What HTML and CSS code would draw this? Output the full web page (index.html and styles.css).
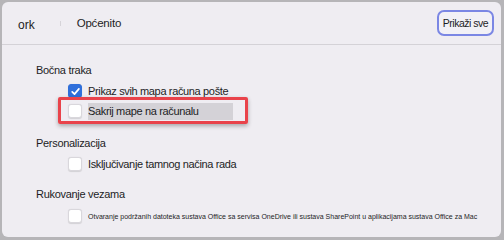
FILE: index.html
```html
<!DOCTYPE html>
<html lang="hr">
<head>
  <meta charset="UTF-8">
  <meta name="viewport" content="width=device-width, initial-scale=1.0">
  <title>Općenito</title>
  <link rel="stylesheet" href="styles.css">
</head>
<body>

  <div class="window">

    <!-- Traka s naslovom -->
    <div class="topbar">
      <span class="crumb">ork</span>
      <span class="divider"></span>
      <span class="title">Općenito</span>
      <button class="show-all">Prikaži sve</button>
    </div>

    <div class="content">
      <!-- Bočna traka -->
      <p class="section-label">Bočna traka</p>
      <div class="row first">
        <span class="check checked">
          <svg viewBox="0 0 13 13" width="13" height="13"><path d="M3.2 6.8 L5.5 9.1 L9.9 3.9" fill="none" stroke="#fff" stroke-width="1.7" stroke-linecap="round" stroke-linejoin="round"/></svg>
        </span>
        <span class="row-text">Prikaz svih mapa računa pošte</span>
      </div>
      <div class="row highlighted">
        <span class="check"></span>
        <span class="row-text selected">Sakrij mape na računalu</span>
      </div>

      <!-- Personalizacija -->
      <p class="section-label second">Personalizacija</p>
      <div class="row first">
        <span class="check"></span>
        <span class="row-text">Isključivanje tamnog načina rada</span>
      </div>

      <!-- Rukovanje vezama -->
      <p class="section-label third">Rukovanje vezama</p>
      <div class="row small">
        <span class="check"></span>
        <span class="row-text tiny">Otvaranje podržanih datoteka sustava Office sa servisa OneDrive ili sustava SharePoint u aplikacijama sustava Office za Mac</span>
      </div>
    </div>

  </div>

</body>
</html>
```

FILE: styles.css
```css
body {
  margin: 0;
  height: 240px;
  background-color: #b6b5b8;
  font-family: "Liberation Sans", Arial, sans-serif;
  color: #1d1d1f;
  overflow: hidden;
}
.window {
  margin: 2px 3px 0 2px;
  height: 235px;
  background-color: #efedf2;
  border-radius: 6px;
  overflow: hidden;
}
.topbar {
  height: 42px;
  border-bottom: 1px solid #d4d2d7;
  display: flex;
  align-items: center;
  padding: 0 7px 0 16px;
}
.crumb {
  font-size: 12px;
  margin-top: 4px;
}
.divider {
  width: 1px;
  height: 5px;
  background-color: #d6d4d9;
  margin: 0 16px 0 25px;
}
.title {
  font-size: 11.5px;
  letter-spacing: -0.2px;
}
.show-all {
  margin-left: auto;
  width: 57px;
  height: 26px;
  padding: 0;
  font-family: inherit;
  font-size: 10.5px;
  letter-spacing: -0.5px;
  color: #1d1d1f;
  background-color: #f2f1f6;
  border: 2.5px solid #7b87e4;
  border-radius: 7px;
}
.content {
  padding: 18px 0 0 34px;
}
.section-label {
  margin: 0;
  height: 14px;
  line-height: 14px;
  font-size: 11px;
  letter-spacing: -0.3px;
}
.section-label.second {
  margin-top: 15px;
}
.section-label.third {
  margin-top: 13px;
}
.row {
  display: flex;
  align-items: center;
  height: 20px;
  width: 180px;
  margin-left: 22px;
  padding-left: 10px;
}
.row.first {
  margin-top: 4px;
}
.row.small {
  margin-top: 5px;
  width: 420px;
}
.check {
  width: 12px;
  height: 12px;
  flex-shrink: 0;
  border: 0.5px solid #d9d7dc;
  border-radius: 3px;
  background-color: #fff;
  box-shadow: 0 0.5px 1px rgba(0, 0, 0, 0.12);
  display: flex;
  margin-right: 6px;
}
.check.checked {
  background-color: #2f6fdb;
  border-color: #2f6fdb;
}
.check svg {
  margin: -0.5px;
}
.row-text {
  font-size: 11px;
  letter-spacing: -0.35px;
  white-space: nowrap;
}
.row-text.selected {
  display: inline-block;
  width: 145px;
  line-height: 17px;
  background-color: #d4d2d7;
}
.row-text.tiny {
  font-size: 7px;
  letter-spacing: 0;
}
.highlighted {
  position: relative;
}
.highlighted::after {
  content: "";
  position: absolute;
  top: -4px;
  bottom: -3px;
  left: 0;
  right: 0;
  border: 3.5px solid #e9434b;
  border-radius: 2px;
  box-shadow: 0 2px 4px rgba(0, 0, 0, 0.3);
}
```
